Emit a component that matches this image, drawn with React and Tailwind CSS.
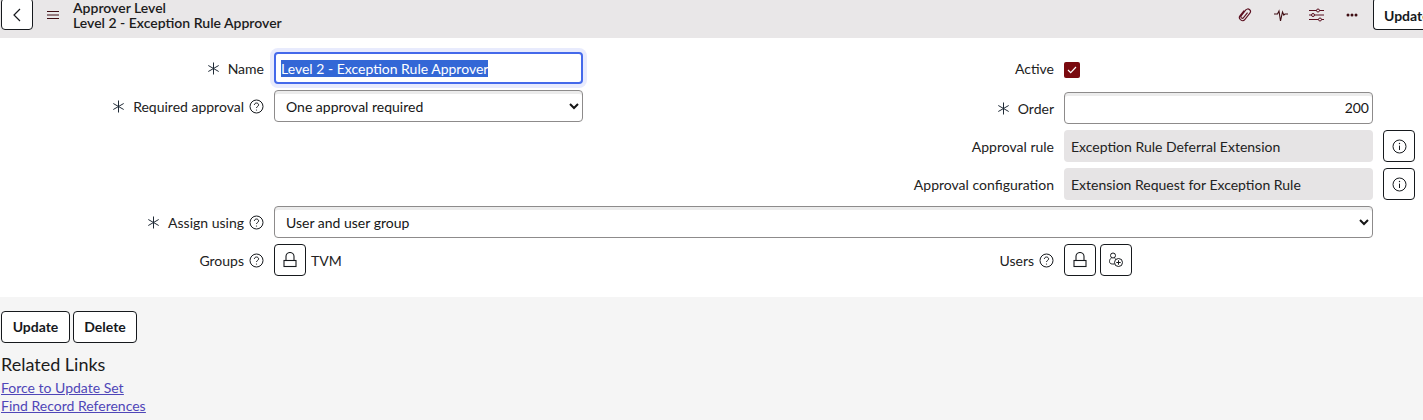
const font = "font-['Lato','Noto_Sans',sans-serif]";

function Star() {
  return (
    <svg width="13" height="13" viewBox="0 0 13 13" fill="none" stroke="#1f2a36" strokeWidth="1">
      <path d="M6.5 0.5V12.5M1.3 3.5L11.7 9.5M11.700 3.500L1.300 9.500" />
    </svg>
  );
}

function Help() {
  return (
    <svg width="15" height="15" viewBox="0 0 15 15" fill="none" stroke="#16191d" strokeWidth="1">
      <circle cx="7.5" cy="7.5" r="6.5" />
      <path d="M5.4 6c0-1.2.9-2 2.1-2s2.1.8 2.1 1.9c0 1.500-2.100 1.600-2.100 3.100" />
      <circle cx="7.5" cy="11" r=".6" fill="#16191d" stroke="none" />
    </svg>
  );
}

function Lock() {
  return (
    <svg width="14" height="16" viewBox="0 0 14 16" fill="none" stroke="#16191d" strokeWidth="1.1">
      <rect x="1" y="8.5" width="12" height="6" />
      <path d="M3 8.500V4.500a4 4 0 0 1 8 0v4" />
    </svg>
  );
}

function Info() {
  return (
    <svg width="15" height="15" viewBox="0 0 15 15" fill="none" stroke="#16191d" strokeWidth="1">
      <circle cx="7.5" cy="7.5" r="6.5" />
      <path d="M7.5 6.600V11" />
      <circle cx="7.5" cy="4.500" r=".7" fill="#16191d" stroke="none" />
    </svg>
  );
}

function AddUser() {
  return (
    <svg width="16" height="16" viewBox="0 0 16 16" fill="none" stroke="#16191d" strokeWidth="1">
      <circle cx="5" cy="3.500" r="2.500" />
      <path d="M3.500 6C2 6.800 1.500 8 1.500 9.500 1.500 11 2.500 12 4.500 12H6.500" />
      <path d="M6.500 6C7 6.300 7.500 6.800 7.800 7.300" />
      <circle cx="10.500" cy="10.500" r="4" />
      <path d="M10.500 8.300v4.400M8.300 10.500h4.400" />
    </svg>
  );
}

function IconBox({ children }) {
  return (
    <button className="flex h-8 w-8 shrink-0 items-center justify-center rounded-[4px] border border-[#16191d] bg-white">
      {children}
    </button>
  );
}

function Label({ text, req, help }) {
  return (
    <div className="flex w-full items-center justify-end gap-[5px] pr-[10px] text-[14px] text-[#222222]">
      {req && <span className="mr-[3px] flex"><Star /></span>}
      <span>{text}</span>
      {help && <Help />}
    </div>
  );
}

const inputClass =
  "h-[32px] w-full rounded-[4px] border border-[#8d8b8b] bg-white text-[14px] text-[#161616] shadow-[inset_0_3px_0_#ececec]";

function App() {
  return (
    <div className={`${font} h-[420px] w-[1423px] overflow-hidden bg-[#f5f5f5] text-[14px]`}>
      <header className="flex h-[38px] items-center bg-[#e9e7e8]">
        <button className="ml-[1px] mt-[-10px] flex h-8 w-8 shrink-0 items-center justify-center rounded-[4px] border border-[#16191d] bg-white pt-[2px]">
          <svg width="10" height="14" viewBox="0 0 10 14" fill="none" stroke="#16191d" strokeWidth="1.2">
            <path d="M8 1L2 7l6 6" />
          </svg>
        </button>
        <svg className="ml-[14px] mt-[-8px]" width="12" height="10" viewBox="0 0 12 10" stroke="#3f0d12" strokeWidth="1">
          <path d="M0 1.500h12M0 5h12M0 8.500h12" />
        </svg>
        <div className="ml-[14px] mt-[-8px] text-[14px] font-semibold leading-[15px] text-[#1c1c1c]">
          <div>Approver Level</div>
          <div>Level 2 - Exception Rule Approver</div>
        </div>
        <div className="ml-auto flex items-center">
          <svg className="mr-[21px] mt-[-8px]" width="16" height="16" viewBox="0 0 16 16" fill="none" stroke="#5b1020" strokeWidth="1.1">
            <g transform="rotate(38 8 8)">
              <path d="M8.500 4.500V11a1.500 1.500 0 0 1-3 0V3.500a2.600 2.600 0 0 1 5.200 0V11.500a3 3 0 0 1-3 3H7.500a3 3 0 0 1-3-3V5" />
            </g>
          </svg>
          <svg className="mr-[21px] mt-[-8px]" width="14" height="14" viewBox="0 0 14 14" fill="none" stroke="#3f0d12" strokeWidth="1.100">
            <path d="M0 6h3.500L5 3l1.500 10L8.500 4l1.300 3L11 6h3" />
          </svg>
          <svg className="mr-[22px] mt-[-8px]" width="15" height="14" viewBox="0 0 15 14" fill="none" stroke="#5b1020" strokeWidth="1">
            <path d="M0 2.500h7.500M10.500 2.500H15M0 7h2.500M5.500 7H15M0 11.500h9.500M12.500 11.500H15" />
            <circle cx="9" cy="2.500" r="1.500" />
            <circle cx="4" cy="7" r="1.500" />
            <circle cx="11" cy="11.500" r="1.500" />
          </svg>
          <svg className="mr-[15px] mt-[-8px]" width="12" height="4" viewBox="0 0 12 4" fill="#3f0d12">
            <circle cx="2" cy="2" r="1.500" />
            <circle cx="6" cy="2" r="1.500" />
            <circle cx="10" cy="2" r="1.500" />
          </svg>
          <div className="mt-[-10px] h-8 w-[50px] overflow-hidden rounded-l-[4px] border border-r-0 border-[#16191d] bg-white pl-[10px] pt-[2px] text-[14px] font-bold leading-[30px] text-[#16191d]">
            Update
          </div>
        </div>
      </header>

      <main className="h-[259px] bg-white pt-[14px]">
        <div className="flex">
          <div className="w-[790px]">
            <div className="grid h-[38px] grid-cols-[274px_309px] items-start">
              <div className="flex h-[33px] items-center"><Label text="Name" req /></div>
              <div className="flex h-[32px] items-center rounded-[4px] border-2 border-[#4469ea] bg-white pl-[5px] text-[14px] shadow-[0_0_0_4px_#e8ebfd]">
                <span className="bg-[#3367d6] leading-[17px] text-white">Level 2 - Exception Rule Approver</span>
              </div>
            </div>
            <div className="grid h-[38px] grid-cols-[274px_309px] items-start">
              <div className="flex h-[33px] items-center"><Label text="Required approval" req help /></div>
              <select className={`${inputClass} pl-[7px]`} defaultValue="One approval required">
                <option>One approval required</option>
              </select>
            </div>
          </div>
          <div className="w-[633px]">
            <div className="grid h-[40px] grid-cols-[274px_309px_43px]">
              <div className="flex h-[33px] items-center"><Label text="Active" /></div>
              <div className="flex h-[32px] items-center pt-[3px]">
                <span className="flex h-4 w-4 items-center justify-center rounded-[2px] bg-[#7a0a0f]">
                  <svg width="10" height="8" viewBox="0 0 10 8" fill="none" stroke="#fff" strokeWidth="1.200">
                    <path d="M1 4l2.700 2.700L9 1" />
                  </svg>
                </span>
              </div>
            </div>
            <div className="grid h-[38px] grid-cols-[274px_309px_43px]">
              <div className="flex h-[32px] items-center"><Label text="Order" req /></div>
              <div className={`${inputClass} pr-[3px] text-right leading-[30px]`}>200</div>
            </div>
            <div className="grid h-[38px] grid-cols-[274px_309px_43px]">
              <div className="flex h-[32px] items-center"><Label text="Approval rule" /></div>
              <div className="h-[32px] rounded-[4px] bg-[#e6e4e5] pl-[7px] leading-[33px] text-[#222222]">Exception Rule Deferral Extension</div>
              <div className="pl-[10px]"><IconBox><Info /></IconBox></div>
            </div>
            <div className="grid h-[38px] grid-cols-[274px_309px_43px]">
              <div className="flex h-[32px] items-center"><Label text="Approval configuration" /></div>
              <div className="h-[32px] rounded-[4px] bg-[#e6e4e5] pl-[7px] leading-[33px] text-[#222222]">Extension Request for Exception Rule</div>
              <div className="pl-[10px]"><IconBox><Info /></IconBox></div>
            </div>
          </div>
        </div>
        <div className="grid h-[38px] grid-cols-[274px_1099px]">
          <div className="flex h-[32px] items-center"><Label text="Assign using" req help /></div>
          <select className={`${inputClass} pl-[7px]`} defaultValue="User and user group">
            <option>User and user group</option>
          </select>
        </div>
        <div className="flex">
          <div className="flex w-[790px]">
            <div className="flex h-8 w-[274px] items-center"><Label text="Groups" help /></div>
            <IconBox><Lock /></IconBox>
            <span className="ml-[5px] leading-[33px] text-[#222222]">TVM</span>
          </div>
          <div className="flex w-[633px]">
            <div className="flex h-8 w-[274px] items-center"><Label text="Users" help /></div>
            <IconBox><Lock /></IconBox>
            <span className="ml-[4px]"><IconBox><AddUser /></IconBox></span>
          </div>
        </div>
      </main>

      <section className="px-[1px] pt-[14px]">
        <div className="flex gap-[3px]">
          <button className="h-8 w-[69px] rounded-[4px] border border-[#16191d] bg-white pb-[1px] text-[14px] font-bold text-[#16191d]">Update</button>
          <button className="h-8 w-[64px] rounded-[4px] border border-[#16191d] bg-white pb-[1px] text-[14px] font-bold text-[#16191d]">Delete</button>
        </div>
        <h2 className="mt-[10px] text-[18px] leading-[22px] text-[#1b1b1b]">Related Links</h2>
        <div className="mt-[4px] flex flex-col items-start text-[14px] leading-[18px] text-[#4f46b8] underline">
          <a>Force to Update Set</a>
          <a>Find Record References</a>
        </div>
      </section>
    </div>
  );
}

export default App;
